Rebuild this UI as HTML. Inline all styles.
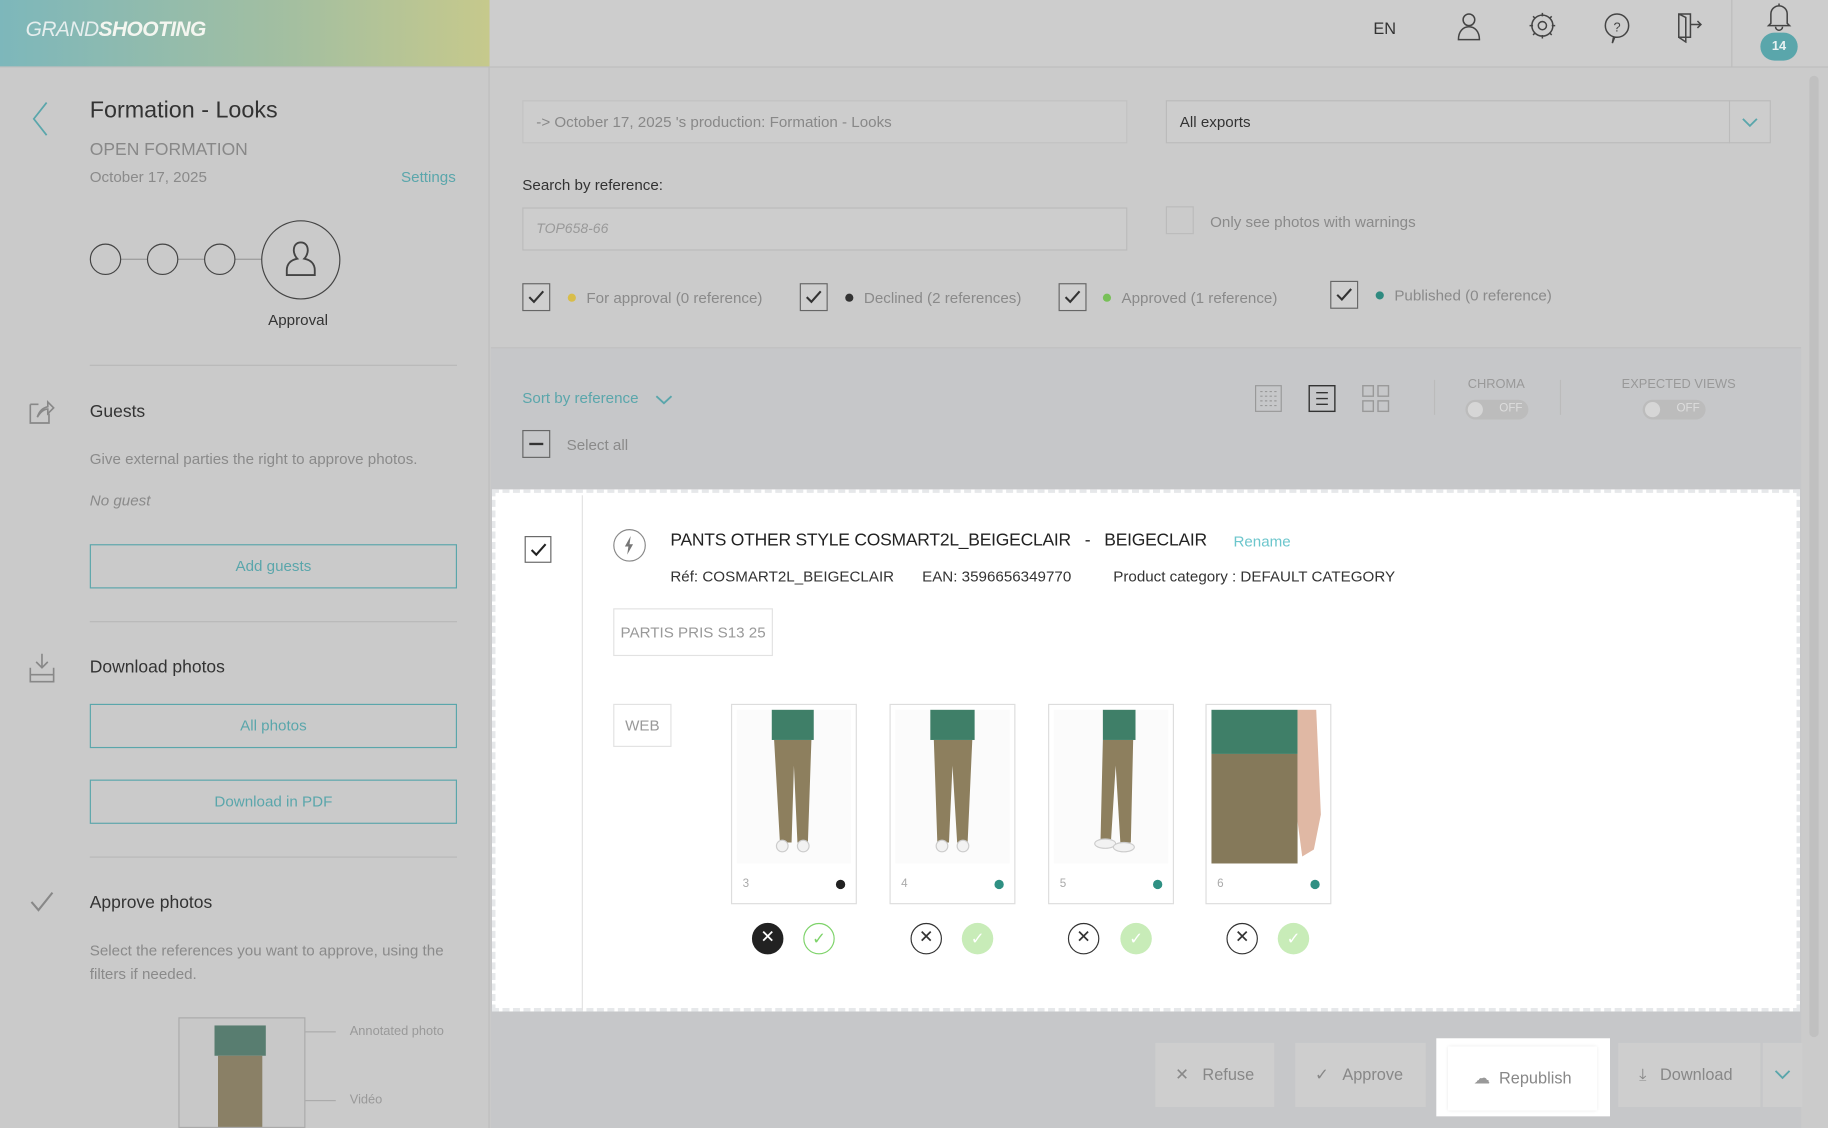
<!DOCTYPE html>
<html><head><meta charset="utf-8"><style>
*{box-sizing:border-box;margin:0;padding:0}
html,body{width:1828px;height:1128px;overflow:hidden;background:#cbcbcb}
#s{position:absolute;left:0;top:0;width:1568px;height:968px;transform:scale(1.16582,1.16529);transform-origin:0 0;font-family:"Liberation Sans",sans-serif;color:#333;background:#cbcbcb}
.a{position:absolute}
.t{font-size:13px;color:#8a8a8a}
.teal{color:#5aa6ab}
.btn{position:absolute;border:1px solid #5aa6ab;color:#5aa6ab;font-size:13px;text-align:center}
.cb{position:absolute;width:24px;height:24px;border:1px solid #666;background:#cfcfcf}
.cb svg{position:absolute;left:3px;top:4px}
.dot{display:inline-block;width:7px;height:7px;border-radius:50%;margin-right:9px;vertical-align:1px}
.ph{position:absolute;top:604px;width:108px;height:172px;border:1px solid #ddd;background:#fff}
.ph .img{position:absolute;left:4px;top:4px;width:98px;height:132px;background:#fbfbfb;overflow:hidden}
.ph .n{position:absolute;left:9px;top:148px;font-size:10px;color:#aaa}
.ph .d{position:absolute;right:9px;top:150px;width:8px;height:8px;border-radius:50%;background:#2f9083}
.rx{position:absolute;top:792px;width:27px;height:27px;border-radius:50%;border:1.5px solid #333;text-align:center;line-height:24px;font-size:15px}
.ok{position:absolute;top:792px;width:27px;height:27px;border-radius:50%;background:#c8ecb8;color:#fff;text-align:center;line-height:27px;font-size:14px}
.bb{position:absolute;top:895px;height:55px;background:#cecece;color:#888;font-size:14px;line-height:55px}
</style></head><body><div id="s">
<div class="a" style="left:0;top:0;width:420px;height:57px;background:linear-gradient(90deg,#7db7bb,#a4bfa0 60%,#c6c98c)"></div>
<div class="a" style="left:22px;top:15px;font-size:18px;color:#e6eeee;font-style:italic;letter-spacing:-0.5px"><span style="font-weight:300">GRAND</span><b style="color:#f4f6f0">SHOOTING</b></div>
<div class="a" style="left:420px;top:0;width:1148px;height:57px;background:#cdcdcd"></div>
<div class="a" style="left:0;top:57px;width:1568px;height:1px;background:#bdbdbd"></div>
<div class="a" style="left:1178px;top:16px;font-size:14px;color:#333">EN</div>
<svg class="a" style="left:1248px;top:10px" width="24" height="26" viewBox="0 0 24 26" fill="none" stroke="#444" stroke-width="1.3"><circle cx="12" cy="7" r="5"/><path d="M3 24c0-7 4-11 9-11s9 4 9 11z"/></svg>
<svg class="a" style="left:1310px;top:9px" width="26" height="26" viewBox="0 0 26 26" fill="none" stroke="#444" stroke-width="1.3"><circle cx="13" cy="13" r="9"/><circle cx="13" cy="13" r="3.5"/><path d="M13 2v3M13 21v3M2 13h3M21 13h3M5 5l2 2M19 19l2 2M5 21l2-2M19 7l2-2"/></svg>
<svg class="a" style="left:1374px;top:10px" width="26" height="28" viewBox="0 0 26 28" fill="none" stroke="#444" stroke-width="1.3"><path d="M13 2a10 10 0 1 0 0 20h-2l-2 5 1-5"/><path d="M13 2a10 10 0 0 1 0 20"/><text x="10" y="17" font-size="11" fill="#444" stroke="none" font-family="Liberation Sans">?</text></svg>
<svg class="a" style="left:1437px;top:9px" width="26" height="28" viewBox="0 0 26 28" fill="none" stroke="#444" stroke-width="1.3"><path d="M3 3h10v20H3zM3 3l6 3v21l-6-4M13 12h9M19 9l3 3-3 3"/></svg>
<div class="a" style="left:1485px;top:0;width:1px;height:57px;background:#bbb"></div>
<svg class="a" style="left:1513px;top:1px" width="26" height="26" viewBox="0 0 26 26" fill="none" stroke="#444" stroke-width="1.3"><path d="M6 19V11a7 7 0 0 1 14 0v8l2 2H4zM13 2v2M10 22a3 3 0 0 0 6 0"/></svg>
<div class="a" style="left:1510px;top:28px;width:32px;height:24px;border-radius:12px;background:#5aa6ab;color:#e8f2f2;font-size:11px;font-weight:bold;text-align:center;line-height:24px">14</div>

<div class="a" style="left:0;top:58px;width:420px;height:910px;background:#cacaca;border-right:1px solid #bdbdbd"></div>
<svg class="a" style="left:26px;top:86px" width="16" height="32" viewBox="0 0 16 32" fill="none" stroke="#5aa6ab" stroke-width="1.5"><path d="M14 2L3 16l11 14"/></svg>
<div class="a" style="left:77px;top:84px;font-size:20px;color:#333">Formation - Looks</div>
<div class="a" style="left:77px;top:120px;font-size:15px;color:#888">OPEN FORMATION</div>
<div class="a t" style="left:77px;top:144px">October 17, 2025</div>
<div class="a teal" style="left:344px;top:144px;font-size:13px">Settings</div>
<div class="a" style="left:90px;top:222px;width:150px;height:1px;background:#999"></div>
<div class="a" style="left:77px;top:209px;width:27px;height:27px;border-radius:50%;border:1.3px solid #444;background:#cacaca"></div>
<div class="a" style="left:126px;top:209px;width:27px;height:27px;border-radius:50%;border:1.3px solid #444;background:#cacaca"></div>
<div class="a" style="left:175px;top:209px;width:27px;height:27px;border-radius:50%;border:1.3px solid #444;background:#cacaca"></div>
<div class="a" style="left:224px;top:189px;width:68px;height:68px;border-radius:50%;border:1.3px solid #444;background:#cacaca"></div>
<svg class="a" style="left:243px;top:206px" width="30" height="34" viewBox="0 0 30 34" fill="none" stroke="#444" stroke-width="1.6"><path d="M15 2c-4 0-6 3-6 7 0 3 2 6 3 7-5 1-9 4-9 10v4h24v-4c0-6-4-9-9-10 1-1 3-4 3-7 0-4-2-7-6-7z"/></svg>
<div class="a" style="left:230px;top:267px;font-size:13px;color:#333">Approval</div>
<div class="a" style="left:77px;top:313px;width:315px;height:1px;background:#b8b8b8"></div>
<svg class="a" style="left:24px;top:341px" width="24" height="24" viewBox="0 0 24 24" fill="none" stroke="#888" stroke-width="1.4"><path d="M2 6h7M2 6v16h16v-8M8 17c2-6 5-8 9-9v-4l5 5-5 5v-4c-3 0-6 2-9 7z"/></svg>
<div class="a" style="left:77px;top:345px;font-size:15px">Guests</div>
<div class="a t" style="left:77px;top:386px">Give external parties the right to approve photos.</div>
<div class="a t" style="left:77px;top:422px;font-style:italic">No guest</div>
<div class="btn" style="left:77px;top:467px;width:315px;height:38px;line-height:36px">Add guests</div>
<div class="a" style="left:77px;top:533px;width:315px;height:1px;background:#b8b8b8"></div>
<svg class="a" style="left:24px;top:559px" width="24" height="28" viewBox="0 0 24 28" fill="none" stroke="#888" stroke-width="1.4"><path d="M12 2v12M7 9l5 5 5-5M2 14v12h20V14M2 20h20"/></svg>
<div class="a" style="left:77px;top:564px;font-size:15px">Download photos</div>
<div class="btn" style="left:77px;top:604px;width:315px;height:38px;line-height:36px">All photos</div>
<div class="btn" style="left:77px;top:669px;width:315px;height:38px;line-height:36px">Download in PDF</div>
<div class="a" style="left:77px;top:735px;width:315px;height:1px;background:#b8b8b8"></div>
<svg class="a" style="left:25px;top:764px" width="22" height="20" viewBox="0 0 22 20" fill="none" stroke="#888" stroke-width="1.8"><path d="M2 10l6 7L20 2"/></svg>
<div class="a" style="left:77px;top:766px;font-size:15px">Approve photos</div>
<div class="a t" style="left:77px;top:806px;line-height:20px;width:320px">Select the references you want to approve, using the filters if needed.</div>
<div class="a" style="left:153px;top:873px;width:109px;height:95px;border:1px solid #aaa;background:#c8c8c8;overflow:hidden">
 <div class="a" style="left:30px;top:6px;width:44px;height:26px;background:#587d70"></div>
 <div class="a" style="left:33px;top:32px;width:38px;height:70px;background:#8a8066"></div>
</div>
<div class="a" style="left:262px;top:885px;width:26px;height:1px;background:#aaa"></div>
<div class="a" style="left:262px;top:944px;width:26px;height:1px;background:#aaa"></div>
<div class="a" style="left:300px;top:879px;font-size:11px;color:#999">Annotated photo</div>
<div class="a" style="left:300px;top:938px;font-size:11px;color:#999">Vidéo</div>

<div class="a" style="left:421px;top:298px;width:1124px;height:1px;background:#c0c0c0"></div>
<div class="a" style="left:421px;top:299px;width:1124px;height:669px;background:#c6c7c9"></div>
<div class="a" style="left:448px;top:86px;width:519px;height:37px;border:1px solid #c2c2c2;background:#cdcdcd;font-size:13px;color:#888;padding:10px 11px">-&gt; October 17, 2025 's production: Formation - Looks</div>
<div class="a" style="left:1000px;top:86px;width:519px;height:37px;border:1px solid #bbb;background:#cdcdcd;font-size:13px;color:#333;padding:10px 11px">All exports</div>
<div class="a" style="left:1483px;top:86px;width:1px;height:37px;background:#bbb"></div>
<svg class="a" style="left:1494px;top:100px" width="14" height="10" viewBox="0 0 14 10" fill="none" stroke="#5aa6ab" stroke-width="1.6"><path d="M1 2l6 6 6-6"/></svg>
<div class="a" style="left:448px;top:151px;font-size:13px;color:#333">Search by reference:</div>
<div class="a" style="left:448px;top:178px;width:519px;height:37px;border:1px solid #bbb;background:#cdcdcd;font-size:12px;color:#999;font-style:italic;padding:10px 11px">TOP658-66</div>
<div class="a" style="left:1000px;top:177px;width:24px;height:24px;border:1px solid #bbb"></div>
<div class="a t" style="left:1038px;top:183px">Only see photos with warnings</div>
<div class="cb" style="left:448px;top:243px"><svg width="16" height="14" viewBox="0 0 16 14" fill="none" stroke="#333" stroke-width="1.8"><path d="M2 7l4 4 8-9"/></svg></div>
<div class="a t" style="left:487px;top:248px"><span class="dot" style="background:#d8bd4a"></span>For approval (0 reference)</div>
<div class="cb" style="left:686px;top:243px"><svg width="16" height="14" viewBox="0 0 16 14" fill="none" stroke="#333" stroke-width="1.8"><path d="M2 7l4 4 8-9"/></svg></div>
<div class="a t" style="left:725px;top:248px"><span class="dot" style="background:#333"></span>Declined (2 references)</div>
<div class="cb" style="left:908px;top:243px"><svg width="16" height="14" viewBox="0 0 16 14" fill="none" stroke="#333" stroke-width="1.8"><path d="M2 7l4 4 8-9"/></svg></div>
<div class="a t" style="left:946px;top:248px"><span class="dot" style="background:#78c058"></span>Approved (1 reference)</div>
<div class="cb" style="left:1141px;top:241px"><svg width="16" height="14" viewBox="0 0 16 14" fill="none" stroke="#333" stroke-width="1.8"><path d="M2 7l4 4 8-9"/></svg></div>
<div class="a t" style="left:1180px;top:246px"><span class="dot" style="background:#2f8a80"></span>Published (0 reference)</div>

<div class="a teal" style="left:448px;top:334px;font-size:13px">Sort by reference</div>
<svg class="a" style="left:562px;top:338px" width="15" height="10" viewBox="0 0 15 10" fill="none" stroke="#5aa6ab" stroke-width="1.6"><path d="M1 2l6.5 6L14 2"/></svg>
<div class="cb" style="left:448px;top:369px;background:none"><div class="a" style="left:5px;top:10px;width:12px;height:2px;background:#333"></div></div>
<div class="a t" style="left:486px;top:374px">Select all</div>
<svg class="a" style="left:1076px;top:330px" width="24" height="24" viewBox="0 0 24 24" fill="none" stroke="#999" stroke-width="1"><rect x="1" y="1" width="22" height="22"/><path d="M5 6h14M5 10h14M5 14h14M5 18h14" stroke-dasharray="2 2"/></svg>
<svg class="a" style="left:1122px;top:330px" width="24" height="24" viewBox="0 0 24 24" fill="none" stroke="#333" stroke-width="1.2"><rect x="1" y="1" width="22" height="22"/><path d="M7 7h10M7 12h10M7 17h10"/></svg>
<svg class="a" style="left:1168px;top:330px" width="24" height="24" viewBox="0 0 24 24" fill="none" stroke="#999" stroke-width="1.2"><rect x="1" y="1" width="9" height="9"/><rect x="14" y="1" width="9" height="9"/><rect x="1" y="14" width="9" height="9"/><rect x="14" y="14" width="9" height="9"/></svg>
<div class="a" style="left:1230px;top:326px;width:1px;height:30px;background:#bbb"></div>
<div class="a" style="left:1338px;top:326px;width:1px;height:30px;background:#bbb"></div>
<div class="a" style="left:1259px;top:324px;font-size:11px;color:#999">CHROMA</div>
<div class="a" style="left:1257px;top:343px;width:54px;height:17px;border-radius:9px;background:#bcbcbc;font-size:10px;color:#ddd;padding:2px 0 0 29px">OFF<div class="a" style="left:2px;top:2px;width:13px;height:13px;border-radius:50%;background:#d6d6d6"></div></div>
<div class="a" style="left:1391px;top:324px;font-size:11px;color:#999">EXPECTED VIEWS</div>
<div class="a" style="left:1409px;top:343px;width:54px;height:17px;border-radius:9px;background:#bcbcbc;font-size:10px;color:#ddd;padding:2px 0 0 29px">OFF<div class="a" style="left:2px;top:2px;width:13px;height:13px;border-radius:50%;background:#d6d6d6"></div></div>
<div class="a" style="left:1552px;top:65px;width:8px;height:825px;border-radius:4px;background:#c0c0c0"></div>

<div class="a" style="left:422px;top:420px;width:1122px;height:448px;background:#fff;border:3px dashed #e6e8ea"></div>
<div class="a" style="left:499px;top:425px;width:1px;height:442px;background:#e2e2e2"></div>
<div class="cb" style="left:450px;top:460px;background:#fff;width:23px;height:23px"><svg width="16" height="14" viewBox="0 0 16 14" fill="none" stroke="#222" stroke-width="1.8"><path d="M2 7l4 4 8-9"/></svg></div>
<div class="a" style="left:526px;top:454px;width:28px;height:28px;border-radius:50%;border:1.3px solid #888"></div>
<svg class="a" style="left:535px;top:460px" width="10" height="16" viewBox="0 0 10 16" fill="#777"><path d="M6 0L1 9h3l-1 7 5-9H5z"/></svg>
<div class="a" style="left:575px;top:455px;font-size:15px;color:#222;letter-spacing:-0.2px">PANTS OTHER STYLE COSMART2L_BEIGECLAIR &nbsp;&nbsp;- &nbsp;&nbsp;BEIGECLAIR</div>
<div class="a" style="left:1058px;top:457px;font-size:13px;color:#6cc6cc">Rename</div>
<div class="a" style="left:575px;top:487px;font-size:13px;color:#333">Réf: COSMART2L_BEIGECLAIR<span style="margin-left:24px">EAN: 3596656349770</span><span style="margin-left:36px">Product category : DEFAULT CATEGORY</span></div>
<div class="a" style="left:526px;top:522px;width:137px;height:41px;border:1px solid #e2e2e2;font-size:13px;color:#999;line-height:40px;text-align:center">PARTIS PRIS S13 25</div>
<div class="a" style="left:526px;top:604px;width:50px;height:37px;border:1px solid #e2e2e2;font-size:13px;color:#999;line-height:36px;text-align:center">WEB</div>

<div class="ph" style="left:627px"><div class="img"><svg width="98" height="132" viewBox="0 0 98 132"><rect x="30" y="0" width="36" height="26" fill="#3f7f68"/><path d="M32 26h32l-3 88h-9l-3-66-2 66h-10z" fill="#8d7f5e"/><ellipse cx="39" cy="117" rx="5" ry="5" fill="#f2f2f2" stroke="#ccc"/><ellipse cx="57" cy="117" rx="5" ry="5" fill="#f2f2f2" stroke="#ccc"/></svg></div><div class="n">3</div><div class="d" style="background:#222"></div></div>
<div class="ph" style="left:763px"><div class="img"><svg width="98" height="132" viewBox="0 0 98 132"><rect x="30" y="0" width="38" height="26" fill="#3f7f68"/><path d="M33 26h33l-4 88h-9l-4-66-3 66h-10z" fill="#8d7f5e"/><ellipse cx="40" cy="117" rx="5" ry="5" fill="#f2f2f2" stroke="#ccc"/><ellipse cx="58" cy="117" rx="5" ry="5" fill="#f2f2f2" stroke="#ccc"/></svg></div><div class="n">4</div><div class="d"></div></div>
<div class="ph" style="left:899px"><div class="img"><svg width="98" height="132" viewBox="0 0 98 132"><rect x="42" y="0" width="28" height="26" fill="#3f7f68"/><path d="M42 26h26l-2 88h-9l-4-66-4 64h-9z" fill="#8d7f5e"/><ellipse cx="44" cy="115" rx="9" ry="4" fill="#f2f2f2" stroke="#ccc"/><ellipse cx="60" cy="118" rx="9" ry="4" fill="#f2f2f2" stroke="#ccc"/></svg></div><div class="n">5</div><div class="d"></div></div>
<div class="ph" style="left:1034px"><div class="img" style="background:#fff"><svg width="98" height="132" viewBox="0 0 98 132"><rect x="0" y="0" width="74" height="38" fill="#3f7f68"/><rect x="0" y="38" width="74" height="94" fill="#85795a"/><path d="M74 0h16l4 90-6 30-10 6-4-30z" fill="#e0b8a4"/></svg></div><div class="n">6</div><div class="d"></div></div>

<div class="rx" style="left:645px;background:#222;color:#fff;border-color:#222">✕</div>
<div class="ok" style="left:689px;background:#fff;border:1.5px solid #7ed36a;color:#7ed36a;line-height:24px">✓</div>
<div class="rx" style="left:781px">✕</div><div class="ok" style="left:825px">✓</div>
<div class="rx" style="left:916px">✕</div><div class="ok" style="left:961px">✓</div>
<div class="rx" style="left:1052px">✕</div><div class="ok" style="left:1096px">✓</div>

<div class="bb" style="left:991px;width:102px;padding-left:17px">✕ &nbsp;&nbsp;Refuse</div>
<div class="bb" style="left:1111px;width:112px;padding-left:17px">✓ &nbsp;&nbsp;Approve</div>
<div class="a" style="left:1232px;top:891px;width:149px;height:67px;background:#fff"></div>
<div class="a" style="left:1242px;top:898px;width:128px;height:55px;background:#fff;box-shadow:0 0 3px #e4e4e4;font-size:14px;color:#888;line-height:55px;padding-left:22px"><span style="color:#999">☁</span> &nbsp;Republish</div>
<div class="bb" style="left:1388px;width:122px;padding-left:18px">⤓ &nbsp;&nbsp;Download</div>
<div class="bb" style="left:1512px;width:34px;text-align:center"><svg width="14" height="10" viewBox="0 0 14 10" fill="none" stroke="#5aa6ab" stroke-width="1.6"><path d="M1 2l6 6 6-6"/></svg></div>
</div></body></html>
